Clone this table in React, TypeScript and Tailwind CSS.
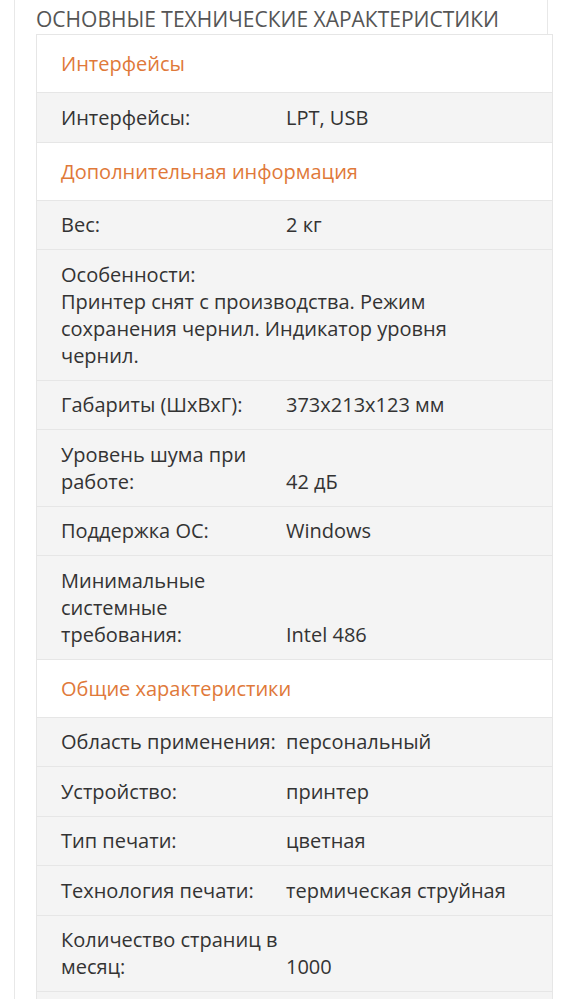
import React from "react";

type Row = { label: React.ReactNode; value?: React.ReactNode; full?: boolean };
type Section = { title: string; rows: Row[] };

const sections: Section[] = [
  {
    title: "Интерфейсы",
    rows: [{ label: "Интерфейсы:", value: "LPT, USB" }],
  },
  {
    title: "Дополнительная информация",
    rows: [
      { label: "Вес:", value: "2 кг" },
      {
        full: true,
        label: (
          <>
            Особенности:
            <br />
            Принтер снят с производства. Режим
            <br />
            сохранения чернил. Индикатор уровня
            <br />
            чернил.
          </>
        ),
      },
      { label: "Габариты (ШхВхГ):", value: "373x213x123 мм" },
      {
        label: (
          <>
            Уровень шума при
            <br />
            работе:
          </>
        ),
        value: "42 дБ",
      },
      { label: "Поддержка ОС:", value: "Windows" },
      {
        label: (
          <>
            Минимальные
            <br />
            системные
            <br />
            требования:
          </>
        ),
        value: "Intel 486",
      },
    ],
  },
  {
    title: "Общие характеристики",
    rows: [
      { label: "Область применения:", value: "персональный" },
      { label: "Устройство:", value: "принтер" },
      { label: "Тип печати:", value: "цветная" },
      { label: "Технология печати:", value: "термическая струйная" },
      {
        label: (
          <>
            Количество страниц в
            <br />
            месяц:
          </>
        ),
        value: "1000",
      },
    ],
  },
];

export default function App() {
  return (
    <div
      className="h-[999px] overflow-hidden bg-white text-[#333]"
      style={{ fontFamily: '"Open Sans", "Noto Sans", sans-serif' }}
    >
      <div className="ml-[14px] h-full w-[534px] border-x border-[#e8e8e8] pl-[21px]">
        <div className="whitespace-nowrap pt-[6px] text-[21px] leading-[27px] uppercase text-[#555]">
          Основные технические характеристики
        </div>
        <div className="mt-[1px] w-[517px] border border-[#e6e6e6]">
          {sections.map((s) => (
            <div key={s.title}>
              <div className="border-b border-[#e6e6e6] bg-white py-[15px] pl-[24px] text-[20px] leading-[27px] text-[#e0793a]">
                {s.title}
              </div>
              {s.rows.map((r, i) => (
                <div
                  key={i}
                  className="flex items-end border-b border-[#e6e6e6] bg-[#f4f4f4] py-[10.75px] text-[20px] leading-[27px]"
                >
                  {r.full ? (
                    <div className="whitespace-nowrap pl-[24px]">{r.label}</div>
                  ) : (
                    <>
                      <div className="w-[249px] shrink-0 whitespace-nowrap pl-[24px] pr-[8px]">
                        {r.label}
                      </div>
                      <div className="whitespace-nowrap">{r.value}</div>
                    </>
                  )}
                </div>
              ))}
            </div>
          ))}
          <div className="h-[48px] bg-[#f4f4f4]" />
        </div>
      </div>
    </div>
  );
}
